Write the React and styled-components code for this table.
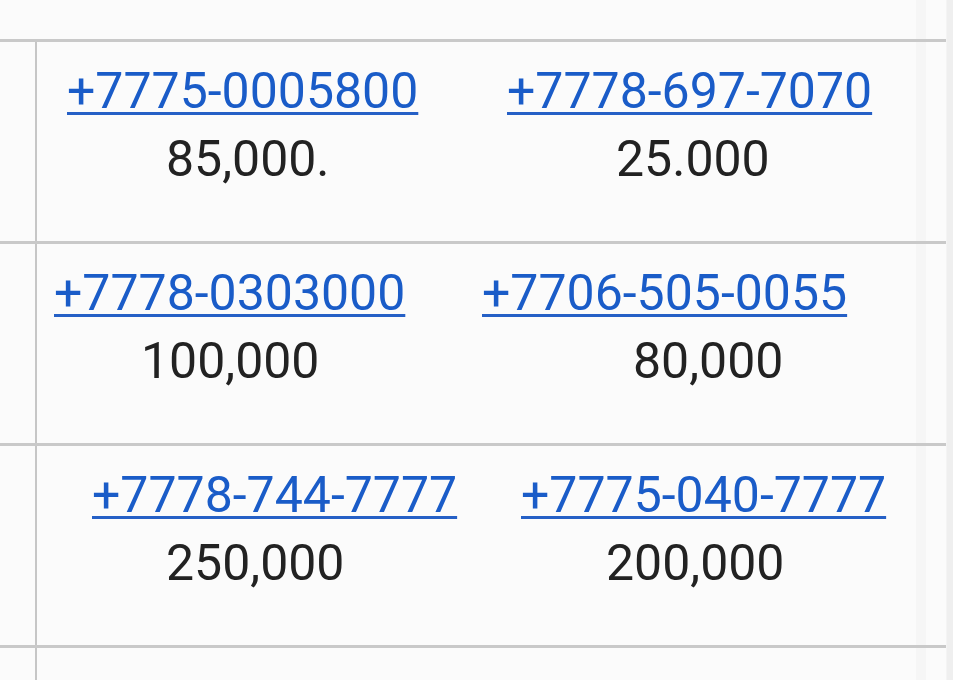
import React from "react";
import styled, { createGlobalStyle } from "styled-components";

const GlobalStyle = createGlobalStyle`
  html, body {
    margin: 0;
    padding: 0;
    background: #fbfbfb;
  }
  body {
    font-family: Roboto, "Noto Sans", "Liberation Sans", sans-serif;
  }
`;

const Page = styled.div`
  display: flex;
  width: 953px;
  height: 680px;
  overflow: hidden;
  background: #fbfbfb;
`;

const Sheet = styled.div`
  width: 946px;
  flex: none;
  display: flex;
  flex-direction: column;
  background: linear-gradient(
    to right,
    transparent 0,
    transparent 916px,
    #f6f6f6 916px,
    #f6f6f6 926px,
    transparent 926px
  );
`;

const ScrollEdge = styled.div`
  flex: 1;
  background: #efefef;
  border-left: 1px solid #f4f4f4;
`;

const TopGap = styled.div`
  height: 39px;
  flex: none;
`;

const Row = styled.div`
  display: grid;
  grid-template-columns: 35px 430px 1fr;
  height: 202px;
  flex: none;
  box-sizing: border-box;
  border-top: 3px solid #c9c9c9;
`;

const Stub = styled.div`
  border-right: 2px solid #c6c6c6;
  width: 35px;
  box-sizing: content-box;
`;

const Cell = styled.div`
  display: flex;
  flex-direction: column;
  align-items: flex-start;
  padding-top: 15px;
  margin-left: ${(p) => (p.$first ? "2px" : "0")};
`;

const Phone = styled.a`
  margin-left: ${(p) => p.$indent}px;
  font-size: 50px;
  line-height: 68px;
  color: #1a5cc8;
  text-decoration: underline;
  text-decoration-thickness: 3px;
  text-underline-offset: 4px;
  text-decoration-color: #2560c6;
  white-space: nowrap;
  cursor: pointer;
`;

const Amount = styled.div`
  margin-left: ${(p) => p.$indent}px;
  font-size: 50px;
  line-height: 68px;
  color: #222222;
  white-space: nowrap;
`;

const rows = [
  [
    { phone: "+7775-0005800", pi: 30, amount: "85,000.", ai: 129 },
    { phone: "+7778-697-7070", pi: 42, amount: "25.000", ai: 151 },
  ],
  [
    { phone: "+7778-0303000", pi: 17, amount: "100,000", ai: 104 },
    { phone: "+7706-505-0055", pi: 17, amount: "80,000", ai: 168 },
  ],
  [
    { phone: "+7778-744-7777", pi: 55, amount: "250,000", ai: 129 },
    { phone: "+7775-040-7777", pi: 56, amount: "200,000", ai: 141 },
  ],
];

export default function App() {
  return (
    <>
      <GlobalStyle />
      <Page>
        <Sheet>
          <TopGap />
          {rows.map((r, i) => (
            <Row key={i}>
              <Stub />
              {r.map((c, j) => (
                <Cell key={j} $first={j === 0}>
                  <Phone $indent={c.pi} href={`tel:${c.phone}`}>
                    {c.phone}
                  </Phone>
                  <Amount $indent={c.ai}>{c.amount}</Amount>
                </Cell>
              ))}
            </Row>
          ))}
          <Row>
            <Stub />
            <Cell $first />
            <Cell />
          </Row>
        </Sheet>
        <ScrollEdge />
      </Page>
    </>
  );
}
